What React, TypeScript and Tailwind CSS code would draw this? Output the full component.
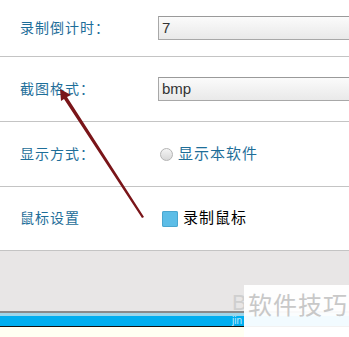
import React from 'react';

const cjk = { fontFamily: '"Liberation Sans", "Noto Sans CJK SC", sans-serif' };

function Field({ value }: { value: string }) {
  return (
    <div className="ml-[138px] h-[24px] flex-1 border border-[#a8a8a8] border-t-[#9a9a9a] border-r-0 bg-gradient-to-b from-[#fbfbfb] to-[#e9e9e9] pl-[3px] text-[15px] leading-[22px] text-[#333]">
      {value}
    </div>
  );
}

function Row({ label, children, h }: { label: string; children: React.ReactNode; h: string }) {
  return (
    <div className={`flex items-center border-b border-[#c4c4c4] pl-[20px] ${h}`}>
      <span className="w-0 whitespace-nowrap text-[14px] tracking-[1px] text-[#1e6e99]">{label}</span>
      {children}
    </div>
  );
}

export default function App() {
  return (
    <div className="relative h-[337px] w-[349px] overflow-hidden bg-white" style={cjk}>
      <Row label="录制倒计时：" h="h-[57px]">
        <Field value="7" />
      </Row>
      <Row label="截图格式：" h="h-[65px]">
        <Field value="bmp" />
      </Row>
      <Row label="显示方式：" h="h-[65px]">
        <div className="ml-[140px] flex items-center gap-[5px]">
          <span className="h-[13px] w-[13px] rounded-full border border-[#b4b4b4] bg-gradient-to-b from-[#f4f4f4] to-[#d8d8d8]" />
          <span className="whitespace-nowrap text-[15px] tracking-[1px] text-[#1e6e99]">显示本软件</span>
        </div>
      </Row>
      <Row label="鼠标设置" h="h-[64px]">
        <div className="ml-[142px] flex items-center gap-[5px]">
          <span className="h-[16px] w-[16px] rounded-[2px] bg-[#5cbde7] shadow-[inset_0_0_0_1px_#4aa6cf]" />
          <span className="whitespace-nowrap text-[15px] tracking-[1px] text-black">录制鼠标</span>
        </div>
      </Row>
      <div className="h-[60px] bg-[#e8e6e6]" />
      <div className="h-[2px] bg-[#8a8a8a]" />
      <div className="h-[3px] bg-[#9ed6ea]" />
      <div className="h-[10px] bg-[#00aeef]" />
      <div className="h-[1px] bg-[#111]" />
      <div className="h-[20px] bg-[#fffff2]" />

      <svg className="absolute left-0 top-0" width="349" height="337" viewBox="0 0 349 337">
        <polygon points="60,89 71,95 67,97 144,217 142,218 64,99 61,101" fill="#7a1519" />
      </svg>

      <span className="absolute left-[232px] top-[292px] text-[22px] leading-none text-[#cfcfcf]">B</span>
      <span className="absolute left-[232px] top-[316px] text-[10px] leading-none text-[#bfe9fb]">jin</span>
      <div className="absolute left-[244px] top-[285px] h-[52px] w-[105px] bg-white/95">
        <span className="absolute left-[4px] top-[9px] whitespace-nowrap text-[24px] leading-none tracking-[1px] text-[#c8c8c8]">软件技巧</span>
      </div>
    </div>
  );
}
